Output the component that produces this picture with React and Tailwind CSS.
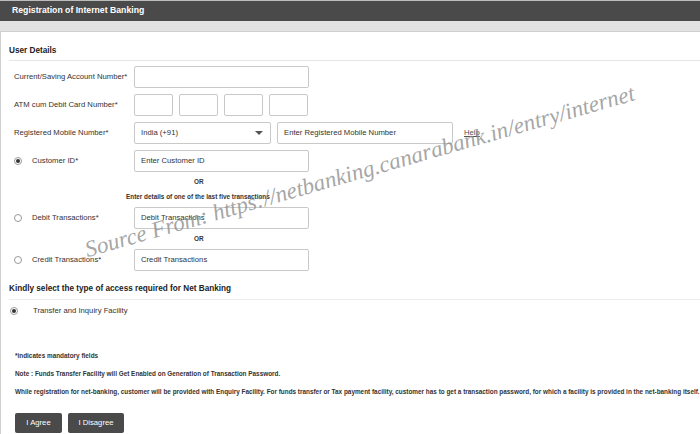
import React from "react";

const Input = ({ w = "w-[175px]", placeholder = "", children }) => (
  <div className={`${w} h-[22px] border border-[#c9c9c9] rounded-[2px] bg-white flex items-center px-[6px] text-[7.7px] text-[#333]`}>
    {placeholder}
    {children}
  </div>
);

const Radio = ({ checked }) => (
  <div className="w-[8px] h-[8px] rounded-full border border-[#9a9a9a] bg-white flex items-center justify-center">
    {checked && <div className="w-[4px] h-[4px] rounded-full bg-[#333]" />}
  </div>
);

export default function App() {
  return (
    <div className="relative w-[700px] h-[434px] overflow-hidden bg-white font-['Liberation_Sans',Arial,sans-serif] text-[#333]">
      <div className="h-[21px] border-t border-[#bdbdbd] bg-[#4a4a4a] flex items-center pl-[12px] text-white font-bold text-[8.7px]">
        Registration of Internet Banking
      </div>
      <div className="h-[11px] bg-[#e3e3e3] border-b border-[#cfcfcf]" />
      <div className="border-l border-[#d0d0d0] h-[402px] pl-[8px] pt-[13px]">
        <div className="text-[8.2px] font-bold leading-[12px] pb-[3px] border-b border-[#e6e6e6] text-[#222]">
          User Details
        </div>
        <div className="pl-[5px] pt-[5px] flex flex-col gap-[6px] text-[7.7px]">
          <div className="flex items-center h-[22px]">
            <div className="w-[120px]">Current/Saving Account Number*</div>
            <Input />
          </div>
          <div className="flex items-center h-[22px]">
            <div className="w-[120px]">ATM cum Debit Card Number*</div>
            <div className="flex gap-[6px]">
              <Input w="w-[39px]" />
              <Input w="w-[39px]" />
              <Input w="w-[39px]" />
              <Input w="w-[39px]" />
            </div>
          </div>
          <div className="flex items-center h-[22px]">
            <div className="w-[120px]">Registered Mobile Number*</div>
            <Input w="w-[137px]" placeholder="India (+91)">
              <div className="ml-auto mr-[1px] w-0 h-0 border-l-[4px] border-r-[4px] border-t-[4px] border-l-transparent border-r-transparent border-t-[#555]" />
            </Input>
            <div className="ml-[6px]">
              <Input w="w-[176px]" placeholder="Enter Registered Mobile Number" />
            </div>
            <div className="ml-[11px] underline text-[#555]">Help</div>
          </div>
          <div className="flex items-center h-[22px]">
            <div className="w-[120px] flex items-center">
              <div className="w-[18px]"><Radio checked /></div>
              <span>Customer ID*</span>
            </div>
            <Input placeholder="Enter Customer ID" />
          </div>
        </div>
        <div className="pl-[5px] text-[6.4px] font-bold">
          <div className="h-[20px] flex items-center pl-[180px]">OR</div>
          <div className="h-[10px] flex items-center pl-[112px]">Enter details of one of the last five transactions</div>
        </div>
        <div className="pl-[5px] pt-[5px] text-[7.7px]">
          <div className="flex items-center h-[22px]">
            <div className="w-[120px] flex items-center">
              <div className="w-[18px]"><Radio /></div>
              <span>Debit Transactions*</span>
            </div>
            <Input placeholder="Debit Transactions" />
          </div>
          <div className="h-[20px] flex items-center pl-[180px] text-[6.4px] font-bold">OR</div>
          <div className="flex items-center h-[22px]">
            <div className="w-[120px] flex items-center">
              <div className="w-[18px]"><Radio /></div>
              <span>Credit Transactions*</span>
            </div>
            <Input placeholder="Credit Transactions" />
          </div>
        </div>
        <div className="mt-[12px] text-[8.2px] font-bold leading-[12px] pb-[4px] border-b border-[#ececec] text-[#222]">
          Kindly select the type of access required for Net Banking
        </div>
        <div className="h-[21px] flex items-center text-[7.7px]">
          <div className="w-[24px] pl-[1px]"><Radio checked /></div>
          <span>Transfer and Inquiry Facility</span>
        </div>
        <div className="pl-[6px] text-[6.4px] font-bold text-[#333]">
          <div className="mt-[26px] h-[18px] flex items-center">*indicates mandatory fields</div>
          <div className="h-[17px] flex items-center">Note : Funds Transfer Facility will Get Enabled on Generation of Transaction Password.</div>
          <div className="h-[19px] flex items-center whitespace-nowrap">While registration for net-banking, customer will be provided with Enquiry Facility. For funds transfer or Tax payment facility, customer has to get a transaction password, for which a facility is provided in the net-banking itself.</div>
          <div className="mt-[12px] flex gap-[6px]">
            <button className="h-[20px] w-[47px] rounded-[2px] bg-[#4a4a4a] text-white text-[7.7px] font-normal">I Agree</button>
            <button className="h-[20px] w-[56px] rounded-[2px] bg-[#4a4a4a] text-white text-[7.7px] font-normal">I Disagree</button>
          </div>
        </div>
      </div>
      <div className="absolute left-[360px] top-[172px] -translate-x-1/2 -translate-y-1/2 -rotate-[16deg] whitespace-nowrap italic text-[23px] text-[#8e8e8e]/80 font-['Liberation_Serif',serif] pointer-events-none">
        Source From: https://netbanking.canarabank.in/entry/internet
      </div>
    </div>
  );
}
